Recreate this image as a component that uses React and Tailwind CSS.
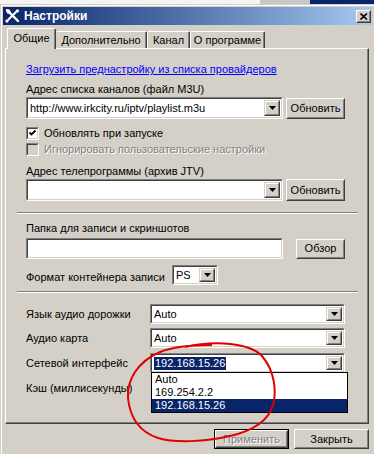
import React from "react";

const Sunken = ({ className = "", bg = "bg-white", children }) => (
  <div className={`border border-t-[#808080] border-l-[#808080] border-b-white border-r-white ${className}`}>
    <div className={`h-full w-full border border-t-[#404040] border-l-[#404040] border-b-[#d4d0c8] border-r-[#d4d0c8] ${bg} flex items-center overflow-hidden`}>
      {children}
    </div>
  </div>
);

const ArrowBtn = () => (
  <div className="w-[16px] h-full shrink-0 border border-t-[#d4d0c8] border-l-[#d4d0c8] border-b-[#404040] border-r-[#404040] bg-[#d4d0c8]">
    <div className="h-full w-full border border-t-white border-l-white border-b-[#808080] border-r-[#808080] flex items-center justify-center">
      <svg width="7" height="4" viewBox="0 0 7 4">
        <path d="M0 0h7L3.5 4z" fill="#000" />
      </svg>
    </div>
  </div>
);

const Combo = ({ className = "", children }) => (
  <Sunken className={className}>
    <div className="flex-1 h-full flex items-center pl-[2px] whitespace-nowrap overflow-hidden">{children}</div>
    <div className="h-[calc(100%-2px)] mr-px">
      <ArrowBtn />
    </div>
  </Sunken>
);

const Btn = ({ className = "", children, disabled = false, def = false }) => (
  <div className={`${def ? "border border-black" : ""} ${className}`}>
    <div className="h-full w-full border border-t-white border-l-white border-b-[#404040] border-r-[#404040] bg-[#d4d0c8]">
      <div className="h-full w-full border border-t-[#d4d0c8] border-l-[#d4d0c8] border-b-[#808080] border-r-[#808080] flex items-center justify-center">
        <span className={disabled ? "text-[#808080] [text-shadow:1px_1px_0_#ffffff]" : "text-black"}>{children}</span>
      </div>
    </div>
  </div>
);

const Check = ({ checked, disabled }) => (
  <Sunken className="w-[13px] h-[13px] shrink-0" bg={disabled ? "bg-[#d4d0c8]" : "bg-white"}>
    {checked && (
      <svg width="9" height="9" viewBox="0 0 9 9">
        <path d="M1.5 3.5 L3.5 5.5 L7.5 1.5" stroke="#000" strokeWidth="1.8" fill="none" />
      </svg>
    )}
  </Sunken>
);

const Sep = ({ className = "" }) => (
  <div className={`ml-[11px] w-[341px] h-[2px] border-t border-t-[#808080] border-b border-b-white ${className}`} />
);

export default function App() {
  return (
    <div className="relative w-[374px] h-[454px] overflow-hidden bg-[#d4d0c8] font-['Liberation_Sans',Arial,sans-serif] text-[11px] leading-[13px] text-black flex flex-col">
      {/* top strip (window behind) */}
      <div className="h-[4px] flex shrink-0">
        <div className="w-[260px] bg-[#f4f4f4]" />
        <div className="w-[50px] bg-[#c8c8c8]" />
        <div className="flex-1 bg-[#0a246a]" />
      </div>
      {/* window */}
      <div className="flex-1 border-l border-t border-[#d4d0c8]">
        <div className="h-full border-l border-t border-white pl-px pt-px pr-[2px]">
          {/* title bar */}
          <div className="h-[18px] bg-gradient-to-r from-[#0a246a] to-[#a6caf0] flex items-center pl-[2px] pr-px">
            <svg width="15" height="14" viewBox="0 0 15 14">
              <path d="M2 1 L13 12" stroke="#fff" strokeWidth="2.4" strokeLinecap="round" />
              <path d="M12.5 1.5 L3 11" stroke="#fff" strokeWidth="2" />
              <path d="M1 2.5 L4 0 L6 3 L3 5 Z" fill="#fff" />
              <path d="M2 10 L4 12 L2 14 L0 12 Z" fill="#fff" />
              <circle cx="12.5" cy="1.8" r="1.6" fill="#fff" />
            </svg>
            <span className="ml-[4px] text-white font-bold text-[12px] leading-[14px]">Настройки</span>
            <div className="flex-1" />
            <div className="w-[15px] h-[13px] border border-t-white border-l-white border-b-[#404040] border-r-[#404040] bg-[#d4d0c8]">
              <div className="h-full w-full border border-t-[#d4d0c8] border-l-[#d4d0c8] border-b-[#808080] border-r-[#808080] flex items-center justify-center">
                <svg width="8" height="7" viewBox="0 0 8 7">
                  <path d="M0.5 0.5 L7 6.5 M7 0.5 L0.5 6.5" stroke="#000" strokeWidth="1.6" />
                </svg>
              </div>
            </div>
          </div>
          {/* body */}
          <div className="ml-[2px] w-[364px]">
            {/* tabs */}
            <div className="flex items-end h-[23px] pl-[2px]">
              <div className="relative z-10 -mb-px h-[21px] w-[49px] bg-[#d4d0c8] border-t border-l border-white border-r border-r-[#404040] shadow-[inset_-1px_0_#808080] rounded-t-[2px] flex items-center justify-center pb-[2px]">
                Общие
              </div>
              <div className="h-[17px] w-[91px] border-t border-white border-r border-r-[#404040] shadow-[inset_-1px_0_#808080] rounded-t-[2px] flex items-center justify-center">
                Дополнительно
              </div>
              <div className="h-[17px] w-[43px] border-t border-l border-white border-r border-r-[#404040] shadow-[inset_-1px_0_#808080] rounded-t-[2px] flex items-center justify-center">
                Канал
              </div>
              <div className="h-[17px] w-[75px] border-t border-l border-white border-r border-r-[#404040] shadow-[inset_-1px_0_#808080] rounded-t-[2px] flex items-center justify-center">
                О программе
              </div>
            </div>
            {/* panel */}
            <div className="h-[376px] border border-t-white border-l-white border-r-[#404040] border-b-[#404040] shadow-[inset_-1px_-1px_#808080] flex flex-col">
              <div className="mt-[14px] pl-[20px] h-[13px]">
                <span className="text-[#0000ff] underline">Загрузить преднастройку из списка провайдеров</span>
              </div>
              <div className="mt-[7px] pl-[20px] h-[13px]">Адрес списка каналов (файл M3U)</div>
              <div className="mt-px pl-[20px] flex items-end gap-[3px]">
                <Combo className="w-[257px] h-[22px]">http://www.irkcity.ru/iptv/playlist.m3u</Combo>
                <Btn className="w-[59px] h-[21px]">Обновить</Btn>
              </div>
              <div className="mt-[8px] pl-[20px] h-[13px] flex items-center gap-[5px]">
                <Check checked />
                <span>Обновлять при запуске</span>
              </div>
              <div className="mt-[3px] pl-[20px] h-[13px] flex items-center gap-[5px]">
                <Check disabled />
                <span className="text-[#808080] [text-shadow:1px_1px_0_#ffffff]">Игнорировать пользовательские настройки</span>
              </div>
              <div className="mt-[9px] pl-[20px] h-[13px]">Адрес телепрограммы (архив JTV)</div>
              <div className="mt-px pl-[20px] flex items-end gap-[3px]">
                <Combo className="w-[257px] h-[22px]" />
                <Btn className="w-[59px] h-[22px]">Обновить</Btn>
              </div>
              <Sep className="mt-[11px]" />
              <div className="mt-[8px] pl-[20px] h-[13px]">Папка для записи и скриншотов</div>
              <div className="mt-[3px] pl-[20px] flex items-center gap-[13px]">
                <Sunken className="w-[257px] h-[21px]" />
                <Btn className="w-[49px] h-[20px]">Обзор</Btn>
              </div>
              <div className="mt-[6px] pl-[20px] h-[20px] flex items-center">
                <span className="w-[146px] shrink-0 pt-[4px]">Формат контейнера записи</span>
                <Combo className="w-[46px] h-[20px]">PS</Combo>
              </div>
              <Sep className="mt-[6px]" />
              <div className="mt-[11px] pl-[20px] h-[20px] flex items-center">
                <span className="w-[124px] shrink-0">Язык аудио дорожки</span>
                <Combo className="w-[195px] h-[20px]">Auto</Combo>
              </div>
              <div className="mt-[4px] pl-[20px] h-[20px] flex items-center">
                <span className="w-[124px] shrink-0">Аудио карта</span>
                <Combo className="w-[195px] h-[20px]">Auto</Combo>
              </div>
              <div className="mt-[5px] pl-[20px] h-[20px] flex items-center">
                <span className="w-[124px] shrink-0">Сетевой интерфейс</span>
                <Combo className="w-[195px] h-[20px]">
                  <span className="bg-[#0a246a] text-white px-px">192.168.15.26</span>
                </Combo>
              </div>
              <div className="mt-[5px] pl-[20px] h-[20px] flex items-center">
                <span className="w-[124px] shrink-0">Кэш (миллисекунды)</span>
              </div>
            </div>
            {/* bottom buttons */}
            <div className="mt-[5px] h-[21px] flex justify-end gap-[5px]">
              <Btn className="w-[75px] h-[20px]" disabled def>Применить</Btn>
              <Btn className="w-[75px] h-[20px]">Закрыть</Btn>
            </div>
          </div>
        </div>
      </div>

      {/* open dropdown list */}
      <div className="absolute left-[151px] top-[372px] w-[197px] h-[41px] bg-white border border-black flex flex-col">
        <div className="h-[13px] pl-[3px]">Auto</div>
        <div className="h-[13px] pl-[3px]">169.254.2.2</div>
        <div className="h-[13px] pl-[3px] bg-[#0a246a] text-white">192.168.15.26</div>
      </div>

      {/* red hand-drawn ellipse */}
      <svg className="absolute left-0 top-0 pointer-events-none" width="374" height="454" viewBox="0 0 374 454">
        <path
          d="M 185 347 C 215 340, 250 343, 262 356 C 274 370, 277 390, 273 405 C 268 422, 252 431, 230 436 C 205 442, 175 443, 158 438 C 140 432, 130 418, 128 398 C 127 380, 137 362, 160 352 C 172 347, 190 345, 212 345"
          stroke="#e00000"
          strokeWidth="2"
          fill="none"
        />
      </svg>
    </div>
  );
}
